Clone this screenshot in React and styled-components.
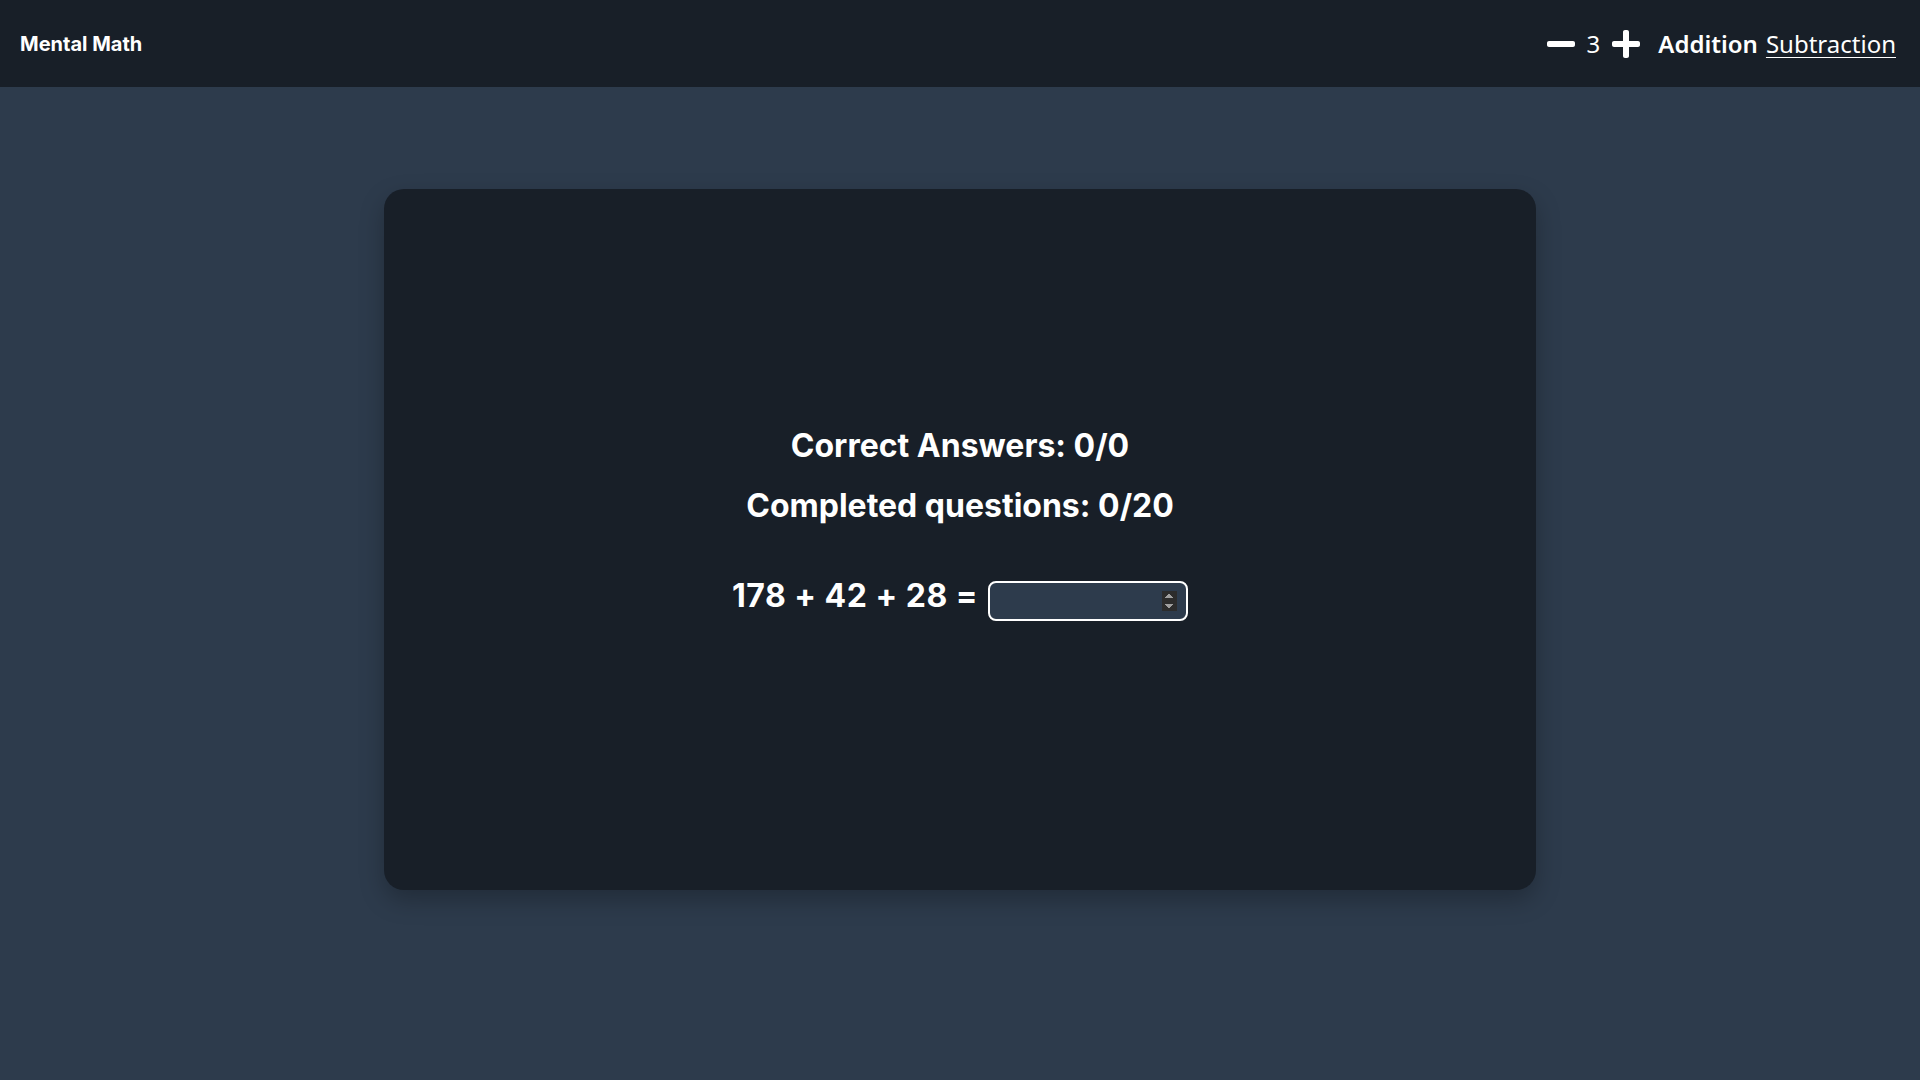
import React, { useState } from "react";
import styled, { createGlobalStyle } from "styled-components";
import { FaMinus, FaPlus } from "react-icons/fa";

const GlobalStyle = createGlobalStyle`
  html, body {
    margin: 0;
    padding: 0;
    background-color: #2d3b4c;
    color: #ffffff;
    font-family: Inter, "Noto Sans", sans-serif;
  }
`;

const Page = styled.div`
  min-height: 100vh;
  display: flex;
  flex-direction: column;
  background-color: #2d3b4c;
`;

const Header = styled.header`
  height: 87px;
  display: flex;
  align-items: center;
  justify-content: space-between;
  padding: 0 24px 0 20px;
  background-color: #181f28;
  box-sizing: border-box;
`;

const Brand = styled.div`
  font-family: Inter, sans-serif;
  font-size: 20px;
  font-weight: 700;
  color: #ffffff;
`;

const Controls = styled.nav`
  display: flex;
  align-items: center;
  font-family: "Noto Sans", "Open Sans", sans-serif;
  font-size: 24px;
  color: #ffffff;
`;

const IconButton = styled.button`
  display: flex;
  align-items: center;
  background: none;
  border: none;
  padding: 0;
  color: #ffffff;
  cursor: pointer;
`;

const Level = styled.span`
  margin: 0 10px;
  line-height: 32px;
`;

const ModeLink = styled.button`
  background: none;
  border: none;
  padding: 0;
  color: #ffffff;
  font-family: inherit;
  font-size: 24px;
  font-weight: ${(p) => (p.active ? 600 : 400)};
  text-decoration: ${(p) => (p.active ? "none" : "underline")};
  text-underline-offset: 4px;
  text-decoration-thickness: 1px;
  margin-left: ${(p) => (p.first ? "16px" : "8px")};
  cursor: pointer;
`;

const Main = styled.main`
  display: flex;
  justify-content: center;
  padding-top: 102px;
`;

const Card = styled.section`
  width: 1152px;
  height: 701px;
  background-color: #181f28;
  border-radius: 20px;
  box-shadow: 0 10px 25px rgba(0, 0, 0, 0.25);
  display: flex;
  flex-direction: column;
  align-items: center;
  justify-content: center;
  gap: 20px;
  padding-bottom: 33px;
  box-sizing: border-box;
`;

const Stat = styled.h2`
  margin: 0;
  font-family: Inter, sans-serif;
  font-size: 32px;
  font-weight: 700;
  line-height: 40px;
  color: #ffffff;
`;

const Equation = styled.div`
  display: flex;
  align-items: baseline;
  gap: 10px;
  margin-top: 30px;
  font-family: Inter, sans-serif;
  font-size: 32px;
  font-weight: 700;
  line-height: 40px;
`;

const Expression = styled.span`
  letter-spacing: 0.5px;
`;

const AnswerInput = styled.input`
  width: 200px;
  height: 40px;
  box-sizing: border-box;
  background-color: #2d3b4c;
  border: 2px solid #ffffff;
  border-radius: 8px;
  color: #ffffff;
  font-family: Inter, sans-serif;
  font-size: 16px;
  padding: 0 9px;
  outline: none;
  color-scheme: dark;

  &::-webkit-inner-spin-button {
    opacity: 1;
  }
`;

const App = () => {
  const [level, setLevel] = useState(3);
  const [mode, setMode] = useState("addition");
  const [answer, setAnswer] = useState("");

  return (
    <Page>
      <GlobalStyle />
      <Header>
        <Brand>Mental Math</Brand>
        <Controls>
          <IconButton onClick={() => setLevel(Math.max(1, level - 1))}>
            <FaMinus size={32} />
          </IconButton>
          <Level>{level}</Level>
          <IconButton onClick={() => setLevel(level + 1)}>
            <FaPlus size={32} />
          </IconButton>
          <ModeLink first active={mode === "addition"} onClick={() => setMode("addition")}>
            Addition
          </ModeLink>
          <ModeLink active={mode === "subtraction"} onClick={() => setMode("subtraction")}>
            Subtraction
          </ModeLink>
        </Controls>
      </Header>
      <Main>
        <Card>
          <Stat>Correct Answers: 0/0</Stat>
          <Stat>Completed questions: 0/20</Stat>
          <Equation>
            <Expression>178 + 42 + 28 =</Expression>
            <AnswerInput type="number" value={answer} onChange={(e) => setAnswer(e.target.value)} />
          </Equation>
        </Card>
      </Main>
    </Page>
  );
};

export default App;
